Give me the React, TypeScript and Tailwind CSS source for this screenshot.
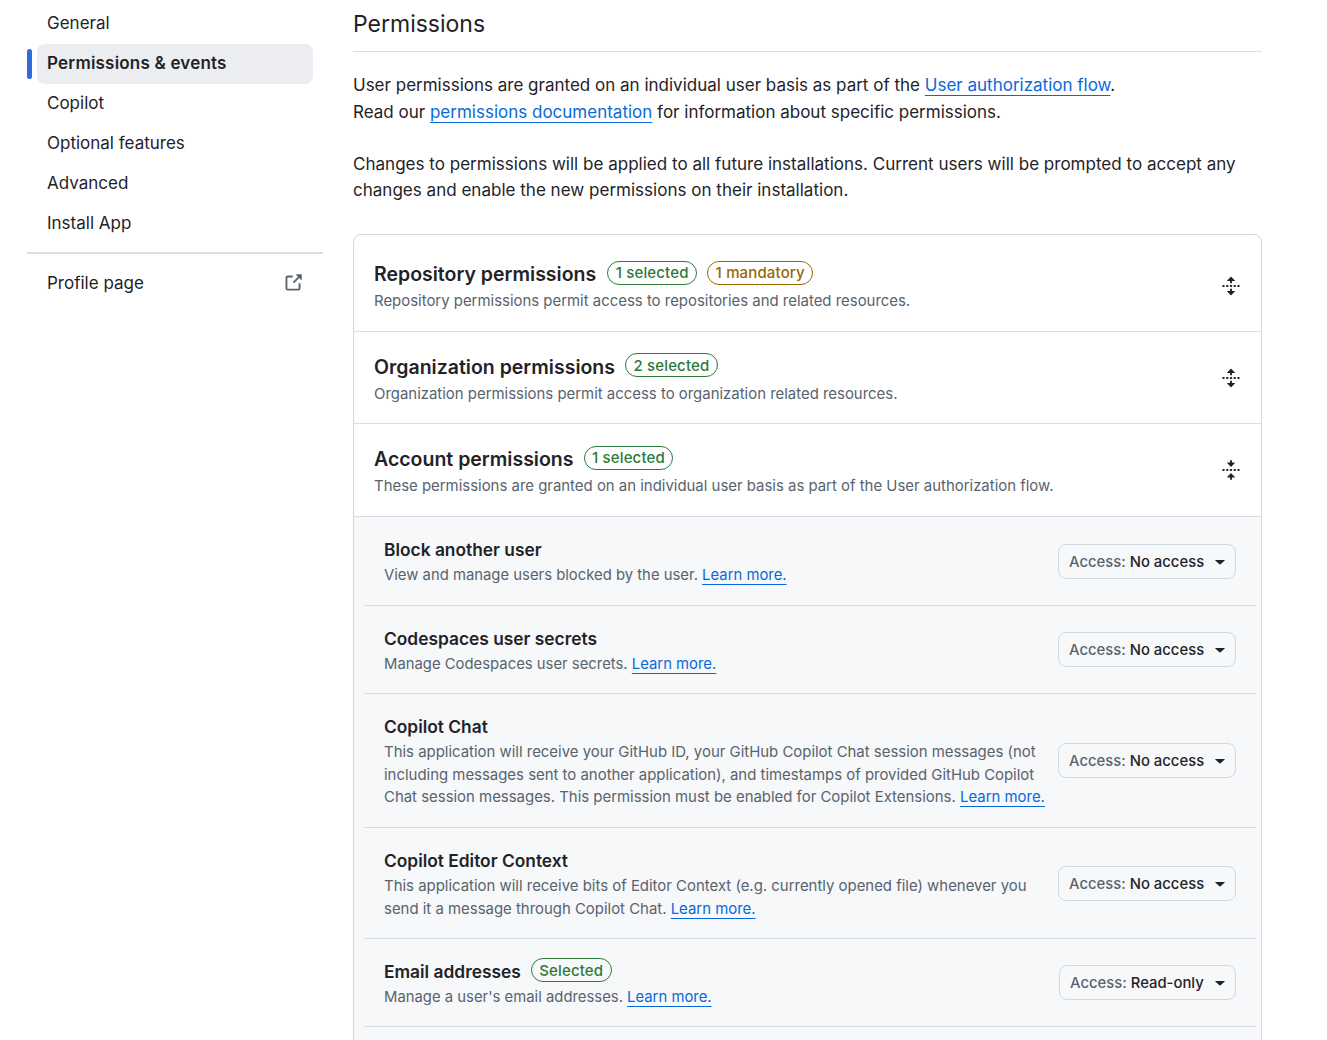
import React from "react";

const UNFOLD = "m8.177.677 2.896 2.896a.25.25 0 0 1-.177.427H8.75v1.25a.75.75 0 0 1-1.5 0V4H5.104a.25.25 0 0 1-.177-.427L7.823.677a.25.25 0 0 1 .354 0ZM7.25 10.75a.75.75 0 0 1 1.5 0V12h2.146a.25.25 0 0 1 .177.427l-2.896 2.896a.25.25 0 0 1-.354 0l-2.896-2.896A.25.25 0 0 1 5.104 12H7.25v-1.25Zm-5-2a.75.75 0 0 0 0-1.5h-.5a.75.75 0 0 0 0 1.5h.5ZM6 8a.75.75 0 0 1-.75.75h-.5a.75.75 0 0 1 0-1.5h.5A.75.75 0 0 1 6 8Zm2.25.75a.75.75 0 0 0 0-1.5h-.5a.75.75 0 0 0 0 1.5h.5ZM12 8a.75.75 0 0 1-.75.75h-.5a.75.75 0 0 1 0-1.5h.5A.75.75 0 0 1 12 8Zm2.25.75a.75.75 0 0 0 0-1.5h-.5a.75.75 0 0 0 0 1.5h.5Z";
const FOLD = "M10.896 2H8.75V.75a.75.75 0 0 0-1.5 0V2H5.104a.25.25 0 0 0-.177.427l2.896 2.896a.25.25 0 0 0 .354 0l2.896-2.896A.25.25 0 0 0 10.896 2ZM8.75 15.25a.75.75 0 0 1-1.5 0V14H5.104a.25.25 0 0 1-.177-.427l2.896-2.896a.25.25 0 0 1 .354 0l2.896 2.896a.25.25 0 0 1-.177.427H8.75v1.25Zm-6.5-6.5a.75.75 0 0 0 0-1.5h-.5a.75.75 0 0 0 0 1.5h.5ZM6 8a.75.75 0 0 1-.75.75h-.5a.75.75 0 0 1 0-1.5h.5A.75.75 0 0 1 6 8Zm2.25.75a.75.75 0 0 0 0-1.5h-.5a.75.75 0 0 0 0 1.5h.5ZM12 8a.75.75 0 0 1-.75.75h-.5a.75.75 0 0 1 0-1.5h.5A.75.75 0 0 1 12 8Zm2.25.75a.75.75 0 0 0 0-1.5h-.5a.75.75 0 0 0 0 1.5h.5Z";
const EXT = "M3.75 2h3.5a.75.75 0 0 1 0 1.5h-3.5a.25.25 0 0 0-.25.25v8.5c0 .138.112.25.25.25h8.5a.25.25 0 0 0 .25-.25v-3.5a.75.75 0 0 1 1.5 0v3.5A1.75 1.75 0 0 1 12.25 14h-8.5A1.75 1.75 0 0 1 2 12.25v-8.5C2 2.784 2.784 2 3.75 2Zm6.854-1h4.146a.25.25 0 0 1 .25.25v4.146a.25.25 0 0 1-.427.177L13.03 4.03 9.28 7.78a.751.751 0 0 1-1.042-.018.751.751 0 0 1-.018-1.042l3.75-3.75-1.543-1.543A.25.25 0 0 1 10.604 1Z";

function Oct({ d, cls }: { d: string; cls: string }) {
  return (
    <svg viewBox="0 0 16 16" width="20" height="20" fill="currentColor" className={cls}>
      <path d={d} />
    </svg>
  );
}

function Link({ children }: { children: React.ReactNode }) {
  return <a className="text-[#0969da] underline underline-offset-[4px] decoration-1">{children}</a>;
}

function Badge({ children, amber }: { children: React.ReactNode; amber?: boolean }) {
  return (
    <span
      className={
        "inline-flex items-center h-[24px] -mt-[3px] px-[7.5px] rounded-full border text-[15px] tracking-[0.15px] font-medium leading-none " +
        (amber ? "border-[#9a6700] text-[#9a6700]" : "border-[#2d7a3a] text-[#2d7a3a]")
      }
    >
      {children}
    </span>
  );
}

function Section({
  title,
  badges,
  desc,
  open,
  h,
  iconCls = "",
}: {
  title: string;
  badges: React.ReactNode;
  desc: string;
  open?: boolean;
  h: string;
  iconCls?: string;
}) {
  return (
    <div className={"flex items-center justify-between border-b border-[#d8dee4] pl-5 pr-5 " + h}>
      <div className="pt-1">
        <div className="flex items-center gap-[10px] h-[28px]">
          <h3 className="text-[19.5px] font-semibold text-[#1f2328] leading-[28px]">{title}</h3>
          {badges}
        </div>
        <p className="text-[14.93px] leading-[26px] text-[#59636e]">{desc}</p>
      </div>
      <Oct d={open ? FOLD : UNFOLD} cls={"text-[#1f2328] w-[20px] h-[20px] " + iconCls} />
    </div>
  );
}

function Select({ value, narrow }: { value: string; narrow?: boolean }) {
  return (
    <div
      className={
        "shrink-0 flex items-center justify-between h-[35px] rounded-lg border border-[#d1d9e0] bg-[#f6f8fa] pl-[10px] pr-[10px] text-[14.85px] font-medium " +
        (narrow ? "w-[177px]" : "w-[178px]")
      }
    >
      <span className="whitespace-nowrap pt-[2px]">
        <span className="text-[#59636e]">Access: </span>
        <span className="text-[#1f2328]">{value}</span>
      </span>
      <svg width="10" height="5" viewBox="0 0 10 6" className="text-[#1f2328] mt-[2px]" fill="currentColor" preserveAspectRatio="none">
        <path d="M.6 0h8.8a.4.4 0 0 1 .3.7L5.3 5.3a.4.4 0 0 1-.6 0L.3.7A.4.4 0 0 1 .6 0Z" />
      </svg>
    </div>
  );
}

function Row({
  title,
  badge,
  children,
  value = "No access",
  h,
  narrow,
  long,
}: {
  title: string;
  badge?: React.ReactNode;
  children: React.ReactNode;
  value?: string;
  h: string;
  narrow?: boolean;
  long?: boolean;
}) {
  return (
    <div className={"ml-[10px] mr-[5px] flex items-center justify-between border-b border-[#d8dee4] pl-5 pr-5 " + h}>
      <div className="w-[664px] pt-[2px]">
        <div className="flex items-center gap-[10px] h-[26px]">
          <h4 className="text-[17.35px] font-semibold text-[#1f2328]">{title}</h4>
          {badge}
        </div>
        <p className={"mt-px leading-[22.4px] text-[#59636e] " + (long ? "text-[14.93px]" : "text-[14.85px]")}>{children}</p>
      </div>
      <Select value={value} narrow={narrow} />
    </div>
  );
}

const nav = ["General", "Permissions & events", "Copilot", "Optional features", "Advanced", "Install App"];

export default function App() {
  return (
    <div className="h-[1040px] overflow-hidden bg-white flex font-['Inter','Liberation_Sans',sans-serif] text-[#1f2328]">
      <aside className="w-[296px] ml-[27px] shrink-0 pt-[4px]">
        {nav.map((n) => {
          const active = n === "Permissions & events";
          return (
            <div key={n} className="relative h-10 ml-[10px] mr-[10px]">
              {active && <span className="absolute -left-[10px] top-[5px] h-[30px] w-[5px] rounded bg-[#2f6bdc]" />}
              <div
                className={
                  "h-10 flex items-center pl-[10px] rounded-lg text-[17px] " +
                  (active ? "bg-[#ecedf0] font-semibold tracking-[0.2px]" : "")
                }
              >
                {n}
              </div>
            </div>
          );
        })}
        <div className="mt-[8px] border-t-2 border-[#d8dee4]" />
        <div className="mt-[10px] h-10 ml-[10px] mr-[10px] pl-[10px] pr-[10px] flex items-center justify-between text-[17px]">
          <span>Profile page</span>
          <Oct d={EXT} cls="text-[#59636e] w-[20px] h-[20px] mb-[2px]" />
        </div>
      </aside>
      <main className="ml-[30px] w-[909px] shrink-0">
        <h2 className="h-[52px] border-b border-[#d8dee4] text-[23px] leading-[48px] font-normal text-[#1f2328]">Permissions</h2>
        <p className="mt-5 text-[17px] leading-[27px]">
          User permissions are granted on an individual user basis as part of the <Link>User authorization flow</Link>.
          <br />
          Read our <Link>permissions documentation</Link> for information about specific permissions.
        </p>
        <p className="mt-[25px] text-[17.05px] leading-[26px]">
          Changes to permissions will be applied to all future installations. Current users will be prompted to accept any changes and enable the new permissions on their installation.
        </p>
        <div className="mt-[31px] border border-[#d1d9e0] rounded-lg overflow-hidden">
          <Section h="h-[97px] pt-[4px]" iconCls="mt-[2px]" title="Repository permissions" badges={<div className="ml-px flex items-center gap-[10px]"><Badge>1 selected</Badge><Badge amber>1 mandatory</Badge></div>} desc="Repository permissions permit access to repositories and related resources." />
          <Section h="h-[92px]" title="Organization permissions" badges={<Badge>2 selected</Badge>} desc="Organization permissions permit access to organization related resources." />
          <Section h="h-[93px]" open title="Account permissions" badges={<Badge>1 selected</Badge>} desc="These permissions are granted on an individual user basis as part of the User authorization flow." />
          <div className="bg-[#f6f8fa]">
            <Row h="h-[89px]" title="Block another user">View and manage users blocked by the user. <Link>Learn more.</Link></Row>
            <Row h="h-[88px]" title="Codespaces user secrets">Manage Codespaces user secrets. <Link>Learn more.</Link></Row>
            <Row long h="h-[134px]" title="Copilot Chat">This application will receive your GitHub ID, your GitHub Copilot Chat session messages (not including messages sent to another application), and timestamps of provided GitHub Copilot Chat session messages. This permission must be enabled for Copilot Extensions. <Link>Learn more.</Link></Row>
            <Row long h="h-[111px]" title="Copilot Editor Context">This application will receive bits of Editor Context (e.g. currently opened file) whenever you send it a message through Copilot Chat. <Link>Learn more.</Link></Row>
            <Row h="h-[88px]" narrow value="Read-only" title="Email addresses" badge={<Badge>Selected</Badge>}>Manage a user's email addresses. <Link>Learn more.</Link></Row>
            <div className="h-[40px]" />
          </div>
        </div>
      </main>
    </div>
  );
}
